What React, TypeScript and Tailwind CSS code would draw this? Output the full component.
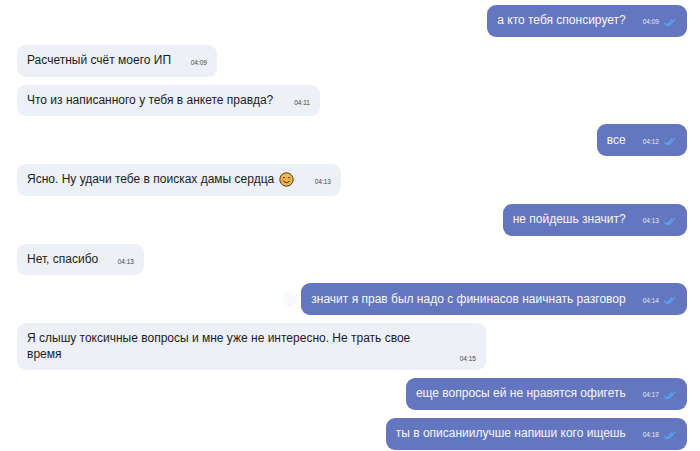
const messages = [
  { id: 1, mine: true, text: "а кто тебя спонсирует?", time: "04:09" },
  { id: 2, mine: false, text: "Расчетный счёт моего ИП", time: "04:09", w: "w-[200px]" },
  { id: 3, mine: false, text: "Что из написанного у тебя в анкете правда?", time: "04:11", w: "w-[303px]" },
  { id: 4, mine: true, text: "все", time: "04:12" },
  { id: 5, mine: false, text: "Ясно. Ну удачи тебе в поисках дамы сердца", time: "04:13", w: "w-[324px]", smile: true },
  { id: 6, mine: true, text: "не пойдешь значит?", time: "04:13" },
  { id: 7, mine: false, text: "Нет, спасибо", time: "04:13", w: "w-[127px]" },
  { id: 8, mine: true, text: "значит я прав был надо с фининасов наичнать разговор", time: "04:14", ghost: true },
  { id: 9, mine: false, text: "Я слышу токсичные вопросы и мне уже не интересно. Не трать свое время", time: "04:15", w: "w-[469px]", tall: true },
  { id: 10, mine: true, text: "еще вопросы ей не нравятся офигеть", time: "04:17" },
  { id: 11, mine: true, text: "ты в описаниилучше напиши кого ищешь", time: "04:18" },
];

function Checks() {
  return (
    <svg width="12" height="9" viewBox="0 0 12 9" fill="none" stroke="#55a8ee" strokeWidth="1.2" className="ml-[5px] mt-[3px] shrink-0">
      <path d="M0.5 5 L3 7.5 L8 1.5" />
      <path d="M4 6.5 L5 7.5 L11 1" />
    </svg>
  );
}

function Smile() {
  return (
    <svg width="15" height="15" viewBox="0 0 15 15" className="ml-[5px] shrink-0">
      <circle cx="7.5" cy="7.5" r="6.7" fill="#f2b84a" stroke="#4a3a1c" strokeWidth="1" />
      <circle cx="3.6" cy="8.4" r="1.3" fill="#ec9a4a" />
      <circle cx="11.4" cy="8.4" r="1.3" fill="#ec9a4a" />
      <path d="M3.8 6 Q5 4.6 6.2 6 M8.8 6 Q10 4.6 11.2 6" fill="none" stroke="#4a3a1c" strokeWidth="1" />
      <path d="M4.6 9.2 Q7.5 12.2 10.4 9.2" fill="none" stroke="#4a3a1c" strokeWidth="1.1" />
    </svg>
  );
}

function Mine({ m }: { m: (typeof messages)[number] }) {
  return (
    <div className="flex justify-end items-center h-[31.75px]">
      {m.ghost && <div className="w-[15px] h-[15px] rounded-full bg-[#f6fafd] mr-[4px]" />}
      <div className="flex items-center h-full pl-[10px] pr-[11px] rounded-[9px] bg-[#6476bf] text-[#f7f8fd]">
        <span className="text-[12px] leading-[16px] -mt-[1px]">{m.text}</span>
        <span className="text-[6.5px] leading-[8px] ml-[17px] mt-[3px] text-[#e6e9f6]">{m.time}</span>
        <Checks />
      </div>
    </div>
  );
}

function Theirs({ m }: { m: (typeof messages)[number] }) {
  if (m.tall) {
    return (
      <div className={`${m.w} h-[47px] rounded-[9px] bg-[#edf0f7] pl-[10px] pr-[10px] pt-[8px] relative text-[#1c1c1c]`}>
        <p className="text-[12px] leading-[15.5px] w-[400px]">{m.text}</p>
        <span className="absolute right-[10px] bottom-[7px] text-[6.5px] leading-[8px] text-[#444]">{m.time}</span>
      </div>
    );
  }
  return (
    <div className={`${m.w} flex items-center h-[31.75px] rounded-[9px] bg-[#edf0f7] pl-[10px] pr-[10px] text-[#1c1c1c]`}>
      <span className="text-[12px] leading-[16px] -mt-[1px] whitespace-nowrap">{m.text}</span>
      {m.smile && <span className="-mt-[1px]"><Smile /></span>}
      <span className="ml-auto text-[6.5px] leading-[8px] mt-[5px] text-[#444]">{m.time}</span>
    </div>
  );
}

export default function App() {
  return (
    <div className="w-[700px] h-[451px] bg-white pt-[5px] pl-[17px] pr-[13px] overflow-hidden font-['Liberation_Sans',Arial,sans-serif]">
      <div className="flex flex-col gap-[8px]">
        {messages.map(m => (m.mine ? <Mine key={m.id} m={m} /> : <Theirs key={m.id} m={m} />))}
      </div>
    </div>
  );
}
